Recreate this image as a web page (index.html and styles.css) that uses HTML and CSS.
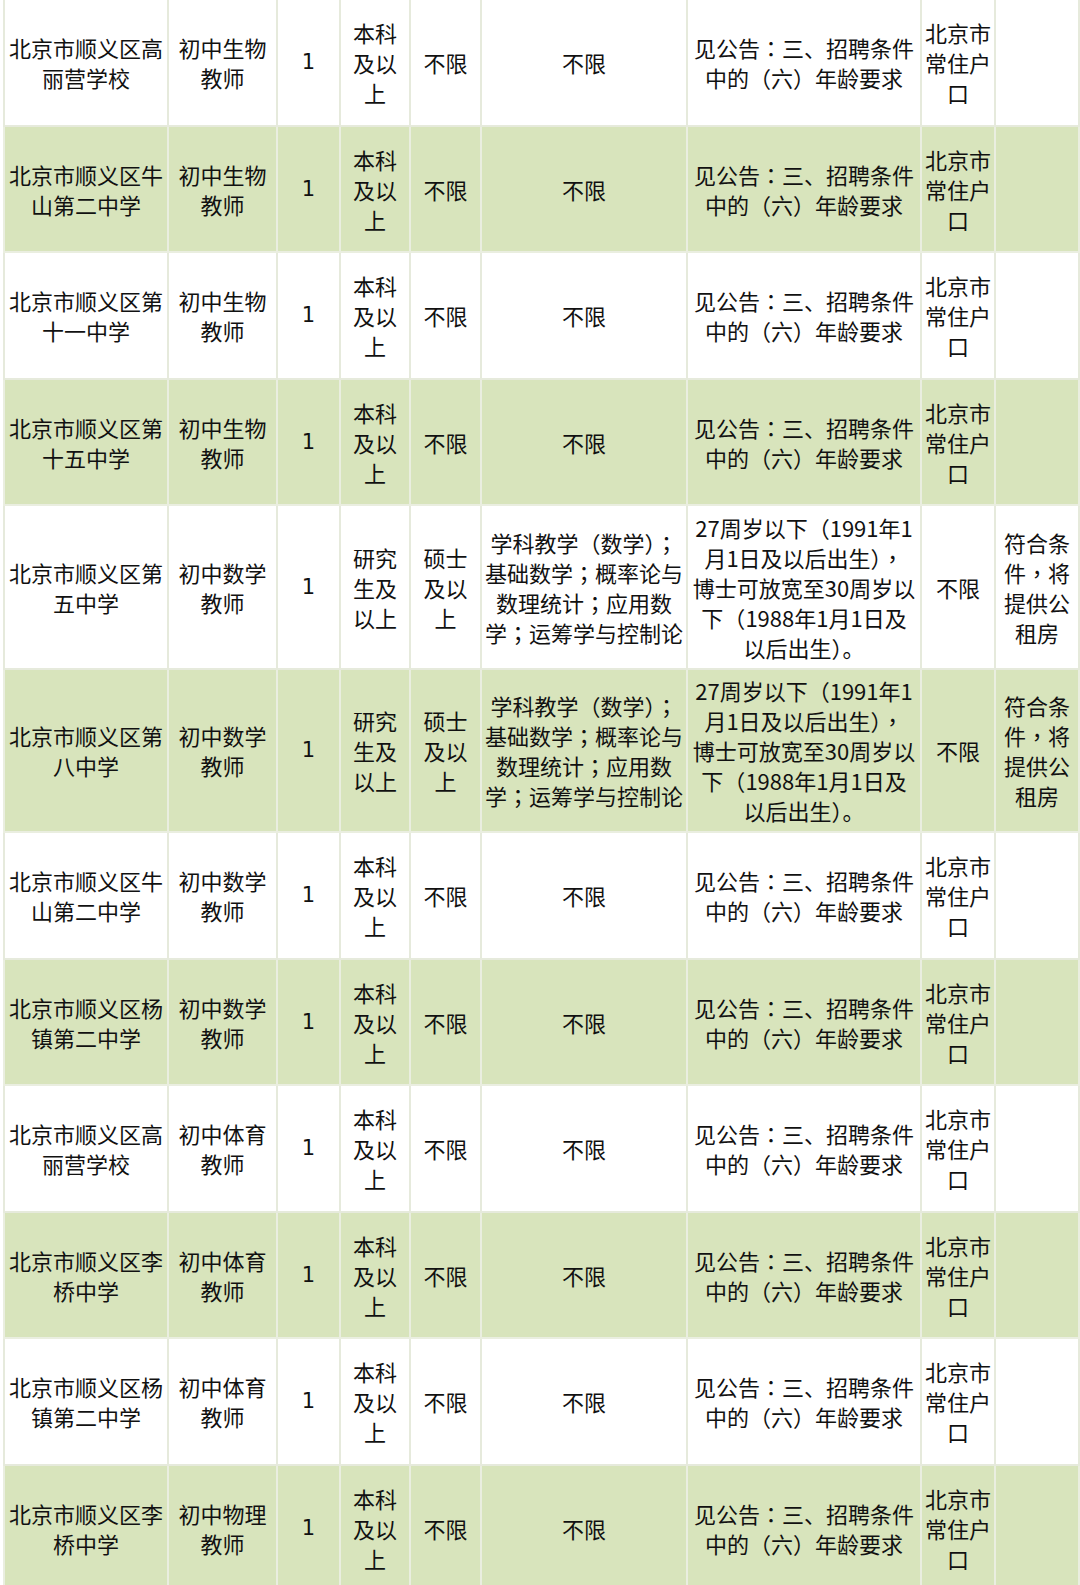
FILE: index.html
```html
<!DOCTYPE html>
<html lang="zh-CN">
<head>
<meta charset="utf-8">
<title>招聘岗位表</title>
<link rel="stylesheet" href="styles.css">
</head>
<body>
<table class="jobs">
  <colgroup>
    <col class="c-school">
    <col class="c-post">
    <col class="c-num">
    <col class="c-edu">
    <col class="c-degree">
    <col class="c-major">
    <col class="c-age">
    <col class="c-hukou">
    <col class="c-note">
  </colgroup>
  <tbody>
    <tr class="row">
      <td>北京市顺义区高<br>丽营学校</td><td>初中生物<br>教师</td><td class="num">1</td><td>本科<br>及以<br>上</td><td>不限</td><td>不限</td><td>见公告<span class="pc" lang="zh-TW">：</span>三、招聘条件<br>中的<span class="pc" lang="zh-TW">（</span>六<span class="pc" lang="zh-TW">）</span>年龄要求</td><td>北京市<br>常住户<br>口</td><td></td>
    </tr>
    <tr class="row alt">
      <td>北京市顺义区牛<br>山第二中学</td><td>初中生物<br>教师</td><td class="num">1</td><td>本科<br>及以<br>上</td><td>不限</td><td>不限</td><td>见公告<span class="pc" lang="zh-TW">：</span>三、招聘条件<br>中的<span class="pc" lang="zh-TW">（</span>六<span class="pc" lang="zh-TW">）</span>年龄要求</td><td>北京市<br>常住户<br>口</td><td></td>
    </tr>
    <tr class="row">
      <td>北京市顺义区第<br>十一中学</td><td>初中生物<br>教师</td><td class="num">1</td><td>本科<br>及以<br>上</td><td>不限</td><td>不限</td><td>见公告<span class="pc" lang="zh-TW">：</span>三、招聘条件<br>中的<span class="pc" lang="zh-TW">（</span>六<span class="pc" lang="zh-TW">）</span>年龄要求</td><td>北京市<br>常住户<br>口</td><td></td>
    </tr>
    <tr class="row alt">
      <td>北京市顺义区第<br>十五中学</td><td>初中生物<br>教师</td><td class="num">1</td><td>本科<br>及以<br>上</td><td>不限</td><td>不限</td><td>见公告<span class="pc" lang="zh-TW">：</span>三、招聘条件<br>中的<span class="pc" lang="zh-TW">（</span>六<span class="pc" lang="zh-TW">）</span>年龄要求</td><td>北京市<br>常住户<br>口</td><td></td>
    </tr>
    <tr class="row tall">
      <td>北京市顺义区第<br>五中学</td><td>初中数学<br>教师</td><td class="num">1</td><td>研究<br>生及<br>以上</td><td>硕士<br>及以<br>上</td><td>学科教学<span class="pc" lang="zh-TW">（</span>数学<span class="pc" lang="zh-TW">）；</span><br>基础数学<span class="pc" lang="zh-TW">；</span>概率论与<br>数理统计<span class="pc" lang="zh-TW">；</span>应用数<br>学<span class="pc" lang="zh-TW">；</span>运筹学与控制论</td><td>27周岁以下<span class="pc" lang="zh-TW">（</span>1991年1<br>月1日及以后出生<span class="pc" lang="zh-TW">），</span><br>博士可放宽至30周岁以<br>下<span class="pc" lang="zh-TW">（</span>1988年1月1日及<br>以后出生<span class="pc" lang="zh-TW">）</span>。</td><td>不限</td><td>符合条<br>件<span class="pc" lang="zh-TW">，</span>将<br>提供公<br>租房</td>
    </tr>
    <tr class="row tall alt">
      <td>北京市顺义区第<br>八中学</td><td>初中数学<br>教师</td><td class="num">1</td><td>研究<br>生及<br>以上</td><td>硕士<br>及以<br>上</td><td>学科教学<span class="pc" lang="zh-TW">（</span>数学<span class="pc" lang="zh-TW">）；</span><br>基础数学<span class="pc" lang="zh-TW">；</span>概率论与<br>数理统计<span class="pc" lang="zh-TW">；</span>应用数<br>学<span class="pc" lang="zh-TW">；</span>运筹学与控制论</td><td>27周岁以下<span class="pc" lang="zh-TW">（</span>1991年1<br>月1日及以后出生<span class="pc" lang="zh-TW">），</span><br>博士可放宽至30周岁以<br>下<span class="pc" lang="zh-TW">（</span>1988年1月1日及<br>以后出生<span class="pc" lang="zh-TW">）</span>。</td><td>不限</td><td>符合条<br>件<span class="pc" lang="zh-TW">，</span>将<br>提供公<br>租房</td>
    </tr>
    <tr class="row">
      <td>北京市顺义区牛<br>山第二中学</td><td>初中数学<br>教师</td><td class="num">1</td><td>本科<br>及以<br>上</td><td>不限</td><td>不限</td><td>见公告<span class="pc" lang="zh-TW">：</span>三、招聘条件<br>中的<span class="pc" lang="zh-TW">（</span>六<span class="pc" lang="zh-TW">）</span>年龄要求</td><td>北京市<br>常住户<br>口</td><td></td>
    </tr>
    <tr class="row alt">
      <td>北京市顺义区杨<br>镇第二中学</td><td>初中数学<br>教师</td><td class="num">1</td><td>本科<br>及以<br>上</td><td>不限</td><td>不限</td><td>见公告<span class="pc" lang="zh-TW">：</span>三、招聘条件<br>中的<span class="pc" lang="zh-TW">（</span>六<span class="pc" lang="zh-TW">）</span>年龄要求</td><td>北京市<br>常住户<br>口</td><td></td>
    </tr>
    <tr class="row">
      <td>北京市顺义区高<br>丽营学校</td><td>初中体育<br>教师</td><td class="num">1</td><td>本科<br>及以<br>上</td><td>不限</td><td>不限</td><td>见公告<span class="pc" lang="zh-TW">：</span>三、招聘条件<br>中的<span class="pc" lang="zh-TW">（</span>六<span class="pc" lang="zh-TW">）</span>年龄要求</td><td>北京市<br>常住户<br>口</td><td></td>
    </tr>
    <tr class="row alt">
      <td>北京市顺义区李<br>桥中学</td><td>初中体育<br>教师</td><td class="num">1</td><td>本科<br>及以<br>上</td><td>不限</td><td>不限</td><td>见公告<span class="pc" lang="zh-TW">：</span>三、招聘条件<br>中的<span class="pc" lang="zh-TW">（</span>六<span class="pc" lang="zh-TW">）</span>年龄要求</td><td>北京市<br>常住户<br>口</td><td></td>
    </tr>
    <tr class="row">
      <td>北京市顺义区杨<br>镇第二中学</td><td>初中体育<br>教师</td><td class="num">1</td><td>本科<br>及以<br>上</td><td>不限</td><td>不限</td><td>见公告<span class="pc" lang="zh-TW">：</span>三、招聘条件<br>中的<span class="pc" lang="zh-TW">（</span>六<span class="pc" lang="zh-TW">）</span>年龄要求</td><td>北京市<br>常住户<br>口</td><td></td>
    </tr>
    <tr class="row alt">
      <td>北京市顺义区李<br>桥中学</td><td>初中物理<br>教师</td><td class="num">1</td><td>本科<br>及以<br>上</td><td>不限</td><td>不限</td><td>见公告<span class="pc" lang="zh-TW">：</span>三、招聘条件<br>中的<span class="pc" lang="zh-TW">（</span>六<span class="pc" lang="zh-TW">）</span>年龄要求</td><td>北京市<br>常住户<br>口</td><td></td>
    </tr>
  </tbody>
</table>
</body>
</html>
```

FILE: styles.css
```css
html, body {
  margin: 0;
  padding: 0;
  background: #ffffff;
}

body {
  font-family: "Noto Sans CJK SC", "Noto Sans", sans-serif;
  color: #111111;
  overflow: hidden;
}

.jobs {
  border-collapse: collapse;
  table-layout: fixed;
  width: 1075px;
  margin: -2px 0 0 3px;
}

.c-school { width: 164px; }
.c-post   { width: 109px; }
.c-num    { width: 63px; }
.c-edu    { width: 70px; }
.c-degree { width: 71px; }
.c-major  { width: 206px; }
.c-age    { width: 234px; }
.c-hukou  { width: 74px; }
.c-note   { width: 84px; }

.jobs td {
  border: 2px solid #e6eadc;
  padding: 0;
  text-align: center;
  vertical-align: middle;
  font-size: 22px;
  line-height: 30px;
  white-space: nowrap;
  overflow: visible;
}

.row {
  height: 126.5px;
  background: #ffffff;
}

.row.tall {
  height: 163.5px;
}

.row.alt {
  background: #d8e4bc;
}

.row.alt td {
  border-color: #eaeee0;
}

.jobs td.num {
  font-family: "DejaVu Sans", "Noto Sans", sans-serif;
  font-size: 21px;
  font-weight: normal;
}

.pc {
  font-family: "Noto Sans CJK TC", "Noto Sans CJK SC", sans-serif;
}
```
